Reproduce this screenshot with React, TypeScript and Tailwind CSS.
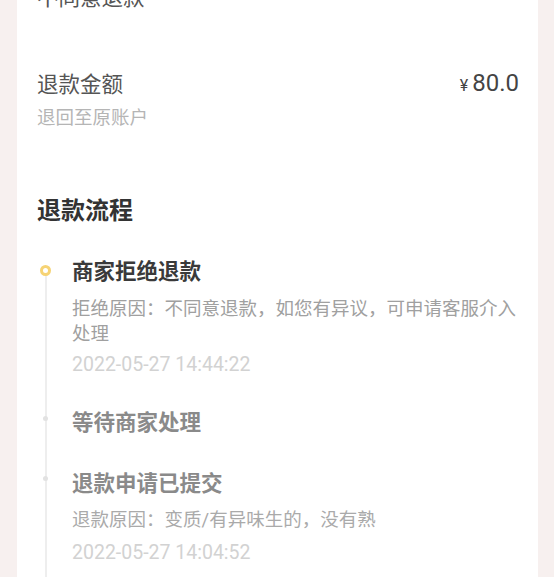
import React from "react";

const font = { fontFamily: 'Roboto, "Noto Sans CJK SC", sans-serif' };

export default function App() {
  return (
    <div className="min-h-[577px] w-[554px] overflow-hidden bg-[#f7f0ef] pl-[17px] pr-[16px]" style={font}>
      <div className="min-h-[577px] bg-white pl-[20px] pr-[19px] pb-[20px]">
        <div className="mt-[-16px] text-[21.5px] leading-[28px] text-[#555]">不同意退款</div>

        <div className="mt-[55px] flex items-center justify-between">
          <div className="text-[21.5px] leading-[32px] text-[#555]">退款金额</div>
          <div className="flex items-baseline leading-[32px] text-[#444]">
            <span className="mr-[4px] text-[16px]">¥</span>
            <span className="text-[24px]">80.0</span>
          </div>
        </div>
        <div className="mt-[3px] text-[18.5px] leading-[26px] text-[#b5b5b5]">退回至原账户</div>

        <div className="mt-[64px] text-[24px] font-bold leading-[32px] text-[#333]">退款流程</div>

        <div className="relative mt-[30px] pl-[35px]">
          <div className="absolute left-[8px] top-[13px] bottom-[-40px] w-[2px] bg-[#eeeeee]" />

          <div className="relative">
            <div className="absolute left-[-32px] top-[7.5px] h-[11px] w-[11px] rounded-full border-[3px] border-[#f6d374] bg-white" />
            <div className="text-[21.5px] font-bold leading-[30px] text-[#3a3a3a]">商家拒绝退款</div>
            <div className="mt-[9.5px] w-[446px] text-[18.5px] leading-[25px] text-[#a0a0a0]">
              拒绝原因：不同意退款，如您有异议，可申请客服介入处理
            </div>
            <div className="mt-[5.5px] text-[19.5px] leading-[26px] text-[#d2d2d2]">2022-05-27 14:44:22</div>
          </div>

          <div className="relative mt-[30px]">
            <div className="absolute left-[-29px] top-[7.5px] h-[5px] w-[5px] rounded-full bg-[#e2e2e2]" />
            <div className="text-[21.5px] font-bold leading-[30px] text-[#8a8a8a]">等待商家处理</div>
          </div>

          <div className="relative mt-[31px]">
            <div className="absolute left-[-29px] top-[6.5px] h-[5px] w-[5px] rounded-full bg-[#e2e2e2]" />
            <div className="text-[21.5px] font-bold leading-[30px] text-[#8a8a8a]">退款申请已提交</div>
            <div className="mt-[8.5px] text-[18.5px] leading-[25px] text-[#aaaaaa]">
              退款原因：变质/有异味生的，没有熟
            </div>
            <div className="mt-[7.5px] text-[19.5px] leading-[26px] text-[#d2d2d2]">2022-05-27 14:04:52</div>
          </div>
        </div>
      </div>
    </div>
  );
}
